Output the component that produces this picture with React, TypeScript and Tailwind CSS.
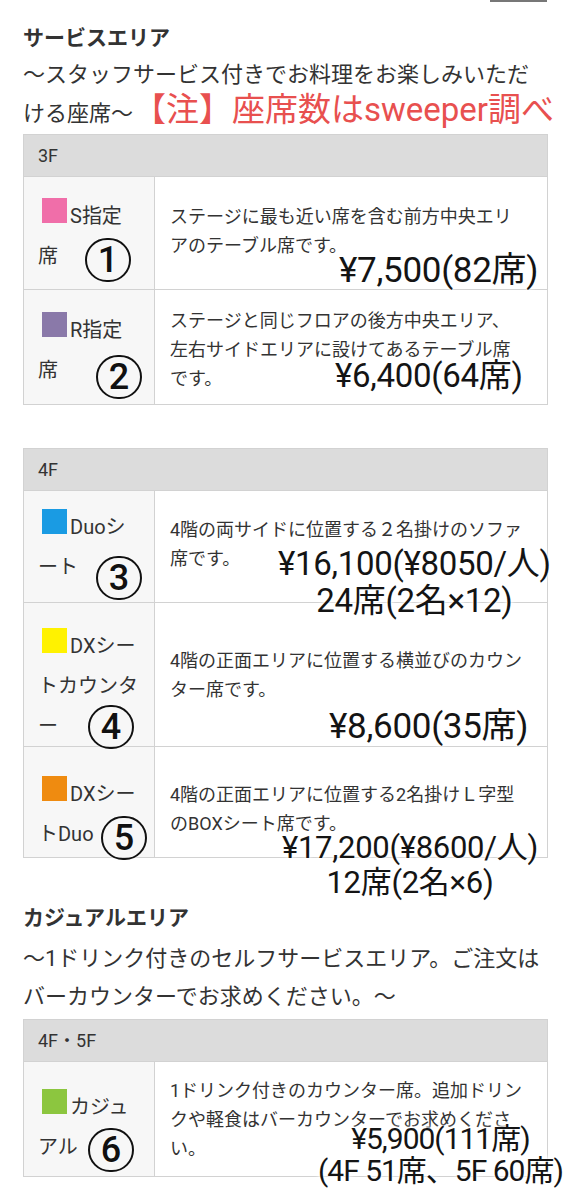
import React from "react";

type Row = {
  color: string;
  label: string[];
  desc: string[];
  num: string;
  h: number;
  lp: number;
  dp: number;
  circle: { left: number; top: number };
  price: { left: number; top: number; size: number; lh?: number; ls?: number; lines: string[] };
};

const glow = "[text-shadow:0_0_2px_#fff,0_0_4px_#fff,0_0_6px_#fff]";

const rows3F: Row[] = [
  {
    color: "bg-[#f06ea9]",
    label: ["S指定", "席"],
    desc: ["ステージに最も近い席を含む前方中央エリ", "アのテーブル席です。"],
    num: "1",
    h: 113,
    lp: 19,
    dp: 25,
    circle: { left: 61, top: 61 },
    price: { left: 315, top: 76, size: 35, lines: ["¥7,500(82席)"] },
  },
  {
    color: "bg-[#8a79a9]",
    label: ["R指定", "席"],
    desc: ["ステージと同じフロアの後方中央エリア、", "左右サイドエリアに設けてあるテーブル席", "です。"],
    num: "2",
    h: 115,
    lp: 20,
    dp: 16,
    circle: { left: 72, top: 65 },
    price: { left: 311, top: 68, size: 33, lines: ["¥6,400(64席)"] },
  },
];

const rows4F: Row[] = [
  {
    color: "bg-[#1a9be3]",
    label: ["Duoシ", "ート"],
    desc: ["4階の両サイドに位置する２名掛けのソファ", "席です。"],
    num: "3",
    h: 112,
    lp: 16,
    dp: 24,
    circle: { left: 72, top: 65 },
    price: { left: 254, top: 54, size: 33, lh: 37, lines: ["¥16,100(¥8050/人)", "24席(2名×12)"] },
  },
  {
    color: "bg-[#fff200]",
    label: ["DXシー", "トカウンタ", "ー"],
    desc: ["4階の正面エリアに位置する横並びのカウン", "ター席です。"],
    num: "4",
    h: 144,
    lp: 23,
    dp: 43,
    circle: { left: 64, top: 102 },
    price: { left: 305, top: 106, size: 35, lines: ["¥8,600(35席)"] },
  },
  {
    color: "bg-[#ef8b10]",
    label: ["DXシー", "トDuo"],
    desc: ["4階の正面エリアに位置する2名掛けＬ字型", "のBOXシート席です。"],
    num: "5",
    h: 111,
    lp: 27,
    dp: 33,
    circle: { left: 77, top: 69 },
    price: { left: 258, top: 83, size: 31, lh: 35, lines: ["¥17,200(¥8600/人)", "12席(2名×6)"] },
  },
];

const rowsCasual: Row[] = [
  {
    color: "bg-[#8cc63f]",
    label: ["カジュ", "アル"],
    desc: ["1ドリンク付きのカウンター席。追加ドリン", "クや軽食はバーカウンターでお求めくださ", "い。"],
    num: "6",
    h: 115,
    lp: 25,
    dp: 14,
    circle: { left: 64, top: 66 },
    price: { left: 294, top: 61, size: 30, lh: 32, ls: -1, lines: ["¥5,900(111席)", "(4F 51席、5F 60席)"] },
  },
];

function Circle({ n, left, top }: { n: string; left: number; top: number }) {
  return (
    <div
      className="absolute z-10 flex h-[44px] w-[46px] items-center justify-center rounded-full border-2 border-[#111] pb-[1px] text-[36px] font-medium leading-none text-[#111] [box-shadow:0_0_3px_#fff] [text-shadow:0_0_3px_#fff]"
      style={{ left, top }}
    >
      {n}
    </div>
  );
}

function SeatRow({ row }: { row: Row }) {
  const p = row.price;
  return (
    <div className="relative flex border-t border-[#d2d2d2]" style={{ height: row.h }}>
      <div className="w-[131px] shrink-0 border-r border-[#d2d2d2] bg-[#f7f7f7] pl-[14px] text-[20px] leading-[40px] text-[#333]" style={{ paddingTop: row.lp }}>
        {row.label.map((l, i) => (
          <div key={i} className="whitespace-nowrap">
            {i === 0 && <span className={`mr-[3px] ml-[4px] inline-block h-[25px] w-[25px] ${row.color}`} />}
            {l}
          </div>
        ))}
      </div>
      <div className="flex-1 bg-white pl-[15px] text-[18px] leading-[29px] text-[#333]" style={{ paddingTop: row.dp }}>
        {row.desc.map((d, i) => (
          <div key={i} className="whitespace-nowrap">{d}</div>
        ))}
      </div>
      <Circle n={row.num} left={row.circle.left} top={row.circle.top} />
      <div
        className={`absolute z-10 flex flex-col items-center whitespace-nowrap text-[#141414] ${glow}`}
        style={{ left: p.left, top: p.top, fontSize: p.size, lineHeight: `${p.lh ?? 36}px`, letterSpacing: p.ls ?? -0.3 }}
      >
        {p.lines.map((l, i) => (
          <div key={i}>{l}</div>
        ))}
      </div>
    </div>
  );
}

function FloorTable({ floor, rows }: { floor: string; rows: Row[] }) {
  return (
    <div className="border border-[#d2d2d2]">
      <div className="flex h-[41px] items-center bg-[#dcdcdc] pl-[14px] text-[18px] text-[#333]">{floor}</div>
      {rows.map((r, i) => (
        <SeatRow key={i} row={r} />
      ))}
    </div>
  );
}

export default function App() {
  return (
    <div className="min-h-[1200px] w-[571px] overflow-hidden bg-white font-['Roboto','Noto_Sans_CJK_JP',sans-serif] text-[#333]">
      <div className="flex justify-end pr-[24px]">
        <div className="h-[2px] w-[57px] bg-[#777]" />
      </div>
      <div className="px-[23px]">
        <h2 className="mt-[22px] text-[21px] font-bold leading-[28px] text-[#333]">サービスエリア</h2>
        <p className="mt-[4px] text-[22px] leading-[37px]">
          ～スタッフサービス付きでお料理をお楽しみいただ
        </p>
        <p className="h-[37px] whitespace-nowrap text-[22px] leading-[37px]">
          ける座席～<span className="text-[33px] leading-none text-[#e8504f]">【注】座席数はsweeper調べ</span>
        </p>
        <div className="mt-[4px]">
          <FloorTable floor="3F" rows={rows3F} />
        </div>
        <div className="mt-[43px]">
          <FloorTable floor="4F" rows={rows4F} />
        </div>
        <h2 className="mt-[46px] text-[21px] font-bold leading-[28px] text-[#333]">カジュアルエリア</h2>
        <p className="mt-[8px] text-[22px] leading-[38px]">
          ～1ドリンク付きのセルフサービスエリア。ご注文は
          <br />
          バーカウンターでお求めください。～
        </p>
        <div className="mt-[3px]">
          <FloorTable floor="4F・5F" rows={rowsCasual} />
        </div>
      </div>
    </div>
  );
}
